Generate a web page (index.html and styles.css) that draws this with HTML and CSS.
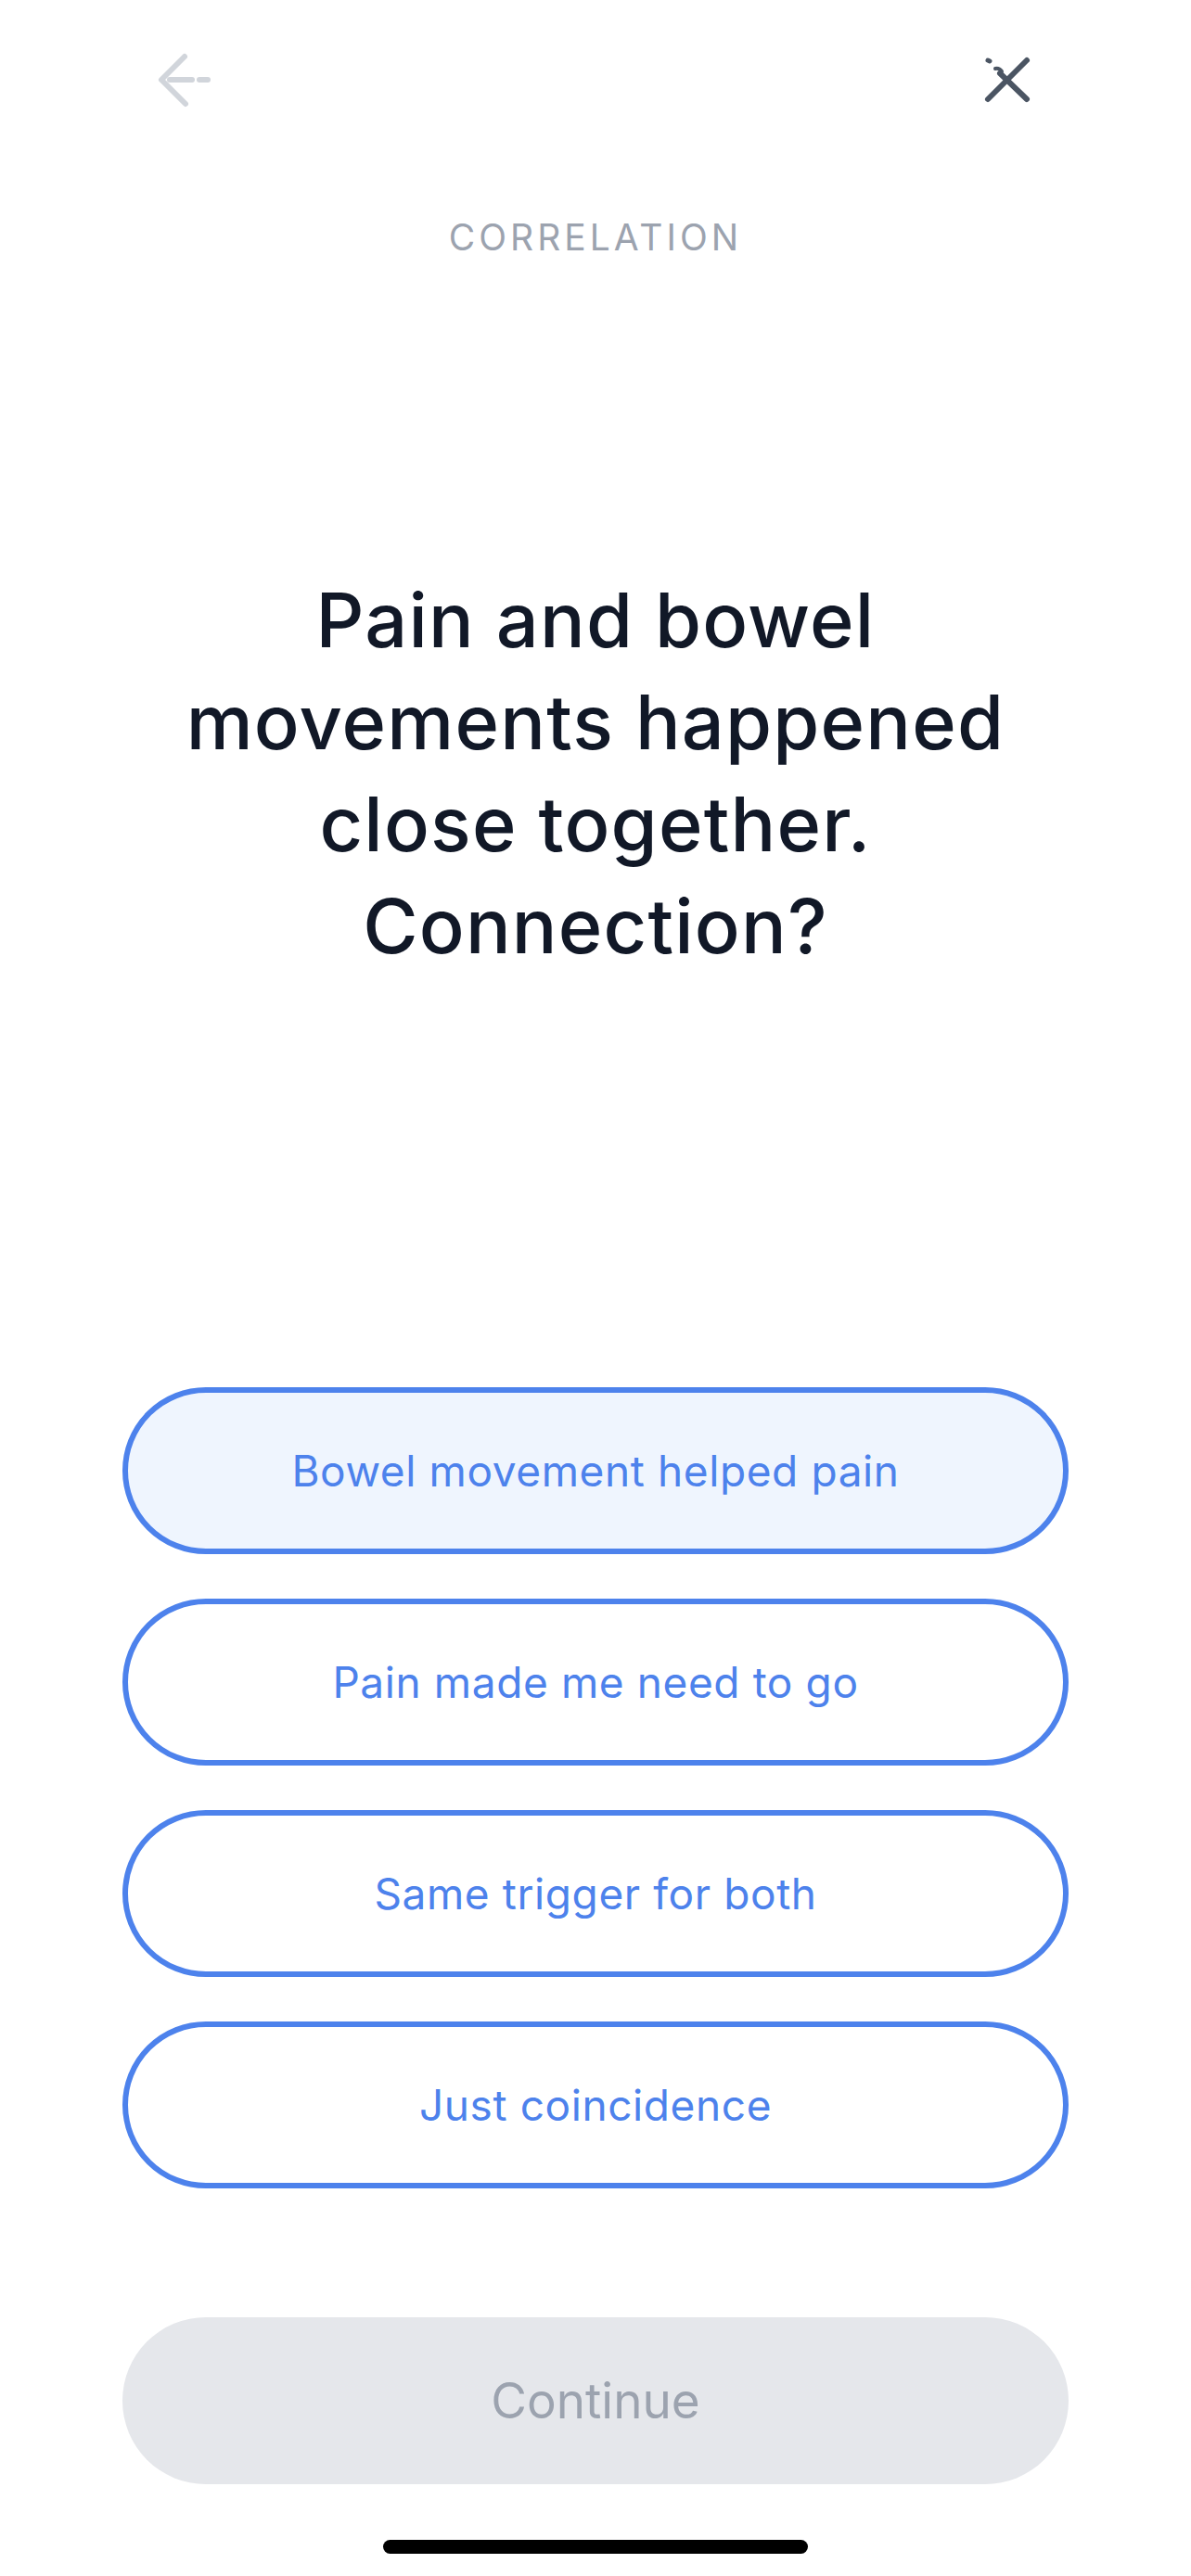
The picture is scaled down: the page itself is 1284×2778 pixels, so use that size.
FILE: index.html
```html
<!DOCTYPE html>
<html lang="en">
<head>
<meta charset="utf-8">
<title>Correlation</title>
<link rel="stylesheet" href="styles.css">
</head>
<body>
<div class="screen">
  <header class="topbar">
    <button class="icon-btn back" aria-label="Back">
      <svg width="64" height="64" viewBox="0 0 64 64" fill="none" stroke="#d1d5db" stroke-width="6" stroke-linecap="round" stroke-linejoin="round">
        <polyline points="32,7 7,32 33,58"/>
        <line x1="16" y1="32" x2="40" y2="32"/>
        <line x1="48" y1="32" x2="57" y2="32"/>
      </svg>
    </button>
    <button class="icon-btn close" aria-label="Close">
      <svg width="64" height="64" viewBox="0 0 64 64" fill="none" stroke="#4b5563" stroke-width="6" stroke-linecap="round" stroke-linejoin="round">
        <line x1="11" y1="53" x2="53" y2="11"/>
        <line x1="24" y1="25" x2="53" y2="53"/>
        <path d="M19 20 Q23 19 26 23" stroke-width="4"/>
        <line x1="11" y1="11" x2="13" y2="12" stroke-width="5"/>
      </svg>
    </button>
  </header>

  <p class="eyebrow">CORRELATION</p>

  <h1 class="question">Pain and bowel<br>movements happened<br>close together.<br>Connection?</h1>

  <div class="options">
    <button class="option selected">Bowel movement helped pain</button>
    <button class="option">Pain made me need to go</button>
    <button class="option">Same trigger for both</button>
    <button class="option">Just coincidence</button>
  </div>

  <button class="continue" disabled>Continue</button>

  <div class="home-indicator"></div>
</div>
</body>
</html>
```

FILE: styles.css
```css
* { box-sizing: border-box; }

html, body {
  margin: 0;
  padding: 0;
  background: #ffffff;
}

body {
  width: 1284px;
  height: 2778px;
  overflow: hidden;
  font-family: "Inter", "Noto Sans", "Liberation Sans", sans-serif;
}

.screen {
  display: flex;
  flex-direction: column;
  align-items: center;
  width: 1284px;
  height: 2778px;
}

.topbar {
  width: 100%;
  height: 172px;
  display: flex;
  align-items: center;
  justify-content: space-between;
  padding: 0 166px 0 167px;
}

.icon-btn {
  border: 0;
  background: none;
  padding: 0;
  width: 64px;
  height: 64px;
  display: block;
}

.icon-btn svg { display: block; }

.eyebrow {
  margin: 60px 0 0;
  font-size: 39px;
  line-height: 48px;
  letter-spacing: 4px;
  color: #9ca3af;
  font-weight: 400;
  text-align: center;
}

.question {
  margin: 334px 0 0;
  font-size: 81px;
  line-height: 110px;
  font-weight: 500;
  color: #111827;
  text-align: center;
  letter-spacing: 1.2px;
}

.options {
  margin-top: 442px;
  width: 1020px;
  display: flex;
  flex-direction: column;
  gap: 48px;
}

.option {
  height: 180px;
  width: 100%;
  border: 6px solid #4d82ec;
  border-radius: 90px;
  background: #ffffff;
  color: #4d82ec;
  font-family: inherit;
  font-size: 46px;
  font-weight: 400;
  letter-spacing: 0.6px;
  text-align: center;
  padding: 0;
}

.option.selected {
  background: #eff5fe;
}

.continue {
  margin-top: 139px;
  width: 1020px;
  height: 180px;
  border: 0;
  border-radius: 90px;
  background: #e5e7eb;
  color: #9ca3af;
  font-family: inherit;
  font-size: 53px;
  font-weight: 400;
  padding: 0;
}

.home-indicator {
  margin-top: 60px;
  width: 458px;
  height: 15px;
  border-radius: 8px;
  background: #000000;
}
```
